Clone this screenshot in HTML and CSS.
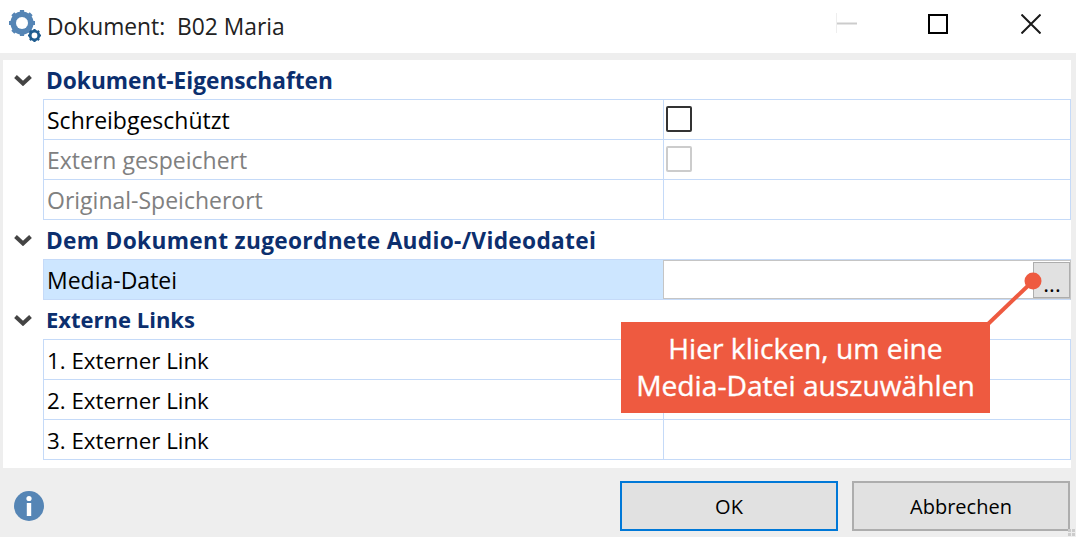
FILE: index.html
```html
<!DOCTYPE html>
<html lang="de">
<head>
<meta charset="utf-8">
<title>Dokument</title>
<link rel="stylesheet" href="styles.css">
</head>
<body>
<div class="dialog">
  <header class="titlebar">
    <svg class="gears" width="36" height="36" viewBox="0 0 36 36">
      <circle cx="14" cy="15" r="8.800" fill="none" stroke="#5585b5" stroke-width="5.600"/>
      <path d="M14 2v26M1 15h26M4.800 5.800l18.400 18.400M23.200 5.800L4.800 24.200" stroke="#5585b5" stroke-width="4.200"/>
      <circle cx="14" cy="15" r="6" fill="#fff"/>
      <circle cx="26.500" cy="27.500" r="4.300" fill="#fff" stroke="#1f5c8f" stroke-width="2.800"/>
      <path d="M26.500 21v2M26.500 32v2M20 27.500h2M31 27.500h2M21.900 22.900l1.400 1.400M29.700 30.700l1.400 1.400M31.100 22.900l-1.400 1.400M23.300 30.700l-1.400 1.400" stroke="#1f5c8f" stroke-width="2.200"/>
    </svg>
    <span class="title">Dokument:&nbsp; B02 Maria</span>
    <div class="winctrls">
      <svg class="min" width="22" height="22" viewBox="0 0 22 22"><path d="M0.500 0v20" stroke="#eee"/><path d="M1 10.500h20" stroke="#ccc" stroke-width="2"/></svg>
      <svg class="max" width="20" height="20" viewBox="0 0 20 20"><rect x="1" y="1" width="18" height="18" fill="none" stroke="#000" stroke-width="2"/></svg>
      <svg class="close" width="20" height="20" viewBox="0 0 20 20"><path d="M0.500 0.500l19 19M19.500 0.500l-19 19" stroke="#1a1a1a" stroke-width="2"/></svg>
    </div>
  </header>

  <main class="panel">
    <div class="section"><svg class="chev" width="18" height="12" viewBox="0 0 18 12"><path d="M1.500 2.500L9 9.500l7.500-7" fill="none" stroke="#444" stroke-width="4"/></svg><span>Dokument-Eigenschaften</span></div>
    <div class="grid">
      <div class="row"><div class="name">Schreibgeschützt</div><div class="value"><span class="check"></span></div></div>
      <div class="row off"><div class="name">Extern gespeichert</div><div class="value"><span class="check"></span></div></div>
      <div class="row off"><div class="name">Original-Speicherort</div><div class="value"></div></div>
    </div>
    <div class="section"><svg class="chev" width="18" height="12" viewBox="0 0 18 12"><path d="M1.500 2.500L9 9.500l7.500-7" fill="none" stroke="#444" stroke-width="4"/></svg><span class="wide">Dem Dokument zugeordnete Audio-/Videodatei</span></div>
    <div class="grid">
      <div class="row selected"><div class="name">Media-Datei</div><div class="value"><button class="browse">...</button></div></div>
    </div>
    <div class="section"><svg class="chev" width="18" height="12" viewBox="0 0 18 12"><path d="M1.500 2.500L9 9.500l7.500-7" fill="none" stroke="#444" stroke-width="4"/></svg><span class="narrow">Externe Links</span></div>
    <div class="grid">
      <div class="row link"><div class="name">1. Externer Link</div><div class="value"></div></div>
      <div class="row link"><div class="name">2. Externer Link</div><div class="value"></div></div>
      <div class="row link"><div class="name">3. Externer Link</div><div class="value"></div></div>
    </div>
  </main>

  <footer class="footer">
    <svg class="info" width="30" height="30" viewBox="0 0 30 30"><circle cx="15" cy="15" r="15" fill="#5585b5"/><circle cx="15" cy="7.500" r="2.600" fill="#fff"/><rect x="12.800" y="12" width="4.400" height="13" fill="#fff"/></svg>
    <div class="buttons">
      <button class="btn primary">OK</button>
      <button class="btn">Abbrechen</button>
    </div>
    <svg class="grip" width="10" height="10" viewBox="0 0 10 10"><path d="M3 3h3v3H3zM7 3h3v3H7zM3 7h3v3H3zM7 7h3v3H7z" fill="#ccc"/></svg>
  </footer>

  <svg class="leader" width="80" height="70" viewBox="0 0 80 70"><path d="M12 64L58 20" stroke="#ee5a40" stroke-width="4"/><circle cx="58" cy="20" r="8.500" fill="#ee5a40"/></svg>
  <div class="callout">Hier klicken, um eine<br>Media-Datei auszuwählen</div>
</div>
</body>
</html>
```
FILE: styles.css
```css
* { box-sizing: border-box; }
html, body { margin: 0; padding: 0; }
body {
  width: 1076px;
  height: 537px;
  overflow: hidden;
  background: #eee;
  font-family: "Open Sans", "Noto Sans", sans-serif;
  color: #000;
}
.dialog { position: relative; width: 1076px; height: 537px; display: flex; flex-direction: column; }
.titlebar { height: 53px; background: #fff; display: flex; align-items: center; padding-left: 8px; flex: none; }
.gears { flex: none; margin-right: 3px; margin-top: -1px; }
.title { font-size: 22.800px; color: #222; }
.winctrls { margin-left: auto; display: flex; align-items: center; padding-right: 35px; margin-top: -5px; }
.min { margin-right: 70px; }
.max { margin-right: 73px; }
.panel { margin: 7px 5px 0 3px; height: 408px; background: #fff; flex: none; }
.section {
  height: 39px;
  display: flex;
  align-items: center;
  padding: 2px 0 0 11px;
  font-weight: 700;
  font-size: 22.700px;
  color: #0c2f6e;
}
.section span { margin-left: -1px; }
.wide { letter-spacing: 0.31px; }
.narrow { font-size: 22px; margin-top: -3px; }
.chev { margin-right: 15px; flex: none; margin-top: -2px; }
.grid { margin-left: 40px; border-top: 1px solid #c5daf8; }
.row { height: 40px; display: flex; border-bottom: 1px solid #c5daf8; border-left: 1px solid #c5daf8; border-right: 1px solid #c5daf8; font-size: 23px; }
.link { font-size: 22.300px; }
.name { width: 619px; padding: 1px 0 0 3px; display: flex; align-items: center; flex: none; }
.value { flex: 1; border-left: 1px solid #c5daf8; display: flex; align-items: center; position: relative; padding-left: 2px; }
.off .name { color: #808080; }
.check { width: 26px; height: 26px; border: 2px solid #333; border-radius: 2px; margin-top: -1px; background: #fff; }
.off .check { border-color: #ccc; }
.selected { border-bottom-color: #c5daf8; border-right-color: #c5c5c5; }
.selected .name { background: #cde6ff; }
.selected .value { border: 1px solid #c5c5c5; border-right: 0; }
.browse {
  position: absolute;
  right: 0;
  top: 1px;
  width: 37px;
  height: 36px;
  background: #e1e1e1;
  border: 1px solid #adadad;
  padding: 2px 0 0 1px;
  font: 400 22px "Open Sans", sans-serif;
  line-height: 36px;
  color: #000;
}
.footer { flex: 1; position: relative; display: flex; align-items: flex-start; padding: 13px 6px 0 14px; }
.info { margin-top: 10px; }
.buttons { margin-left: auto; display: flex; gap: 14px; }
.btn {
  width: 218px;
  height: 50px;
  background: #e1e1e1;
  border: 2px solid #adadad;
  font: 20px "Open Sans", sans-serif;
  color: #000;
  padding: 1px 0 0;
}
.primary { border-color: #0078d7; }
.grip { position: absolute; right: 1px; bottom: 1px; }
.leader { position: absolute; left: 975px; top: 261px; }
.callout {
  position: absolute;
  left: 621px;
  top: 322px;
  width: 369px;
  height: 91px;
  background: #ee5a40;
  color: #fff;
  font-size: 28.200px;
  -webkit-text-stroke: 0.35px #fff;
  line-height: 37px;
  text-align: center;
  padding-top: 8px;
}
```
